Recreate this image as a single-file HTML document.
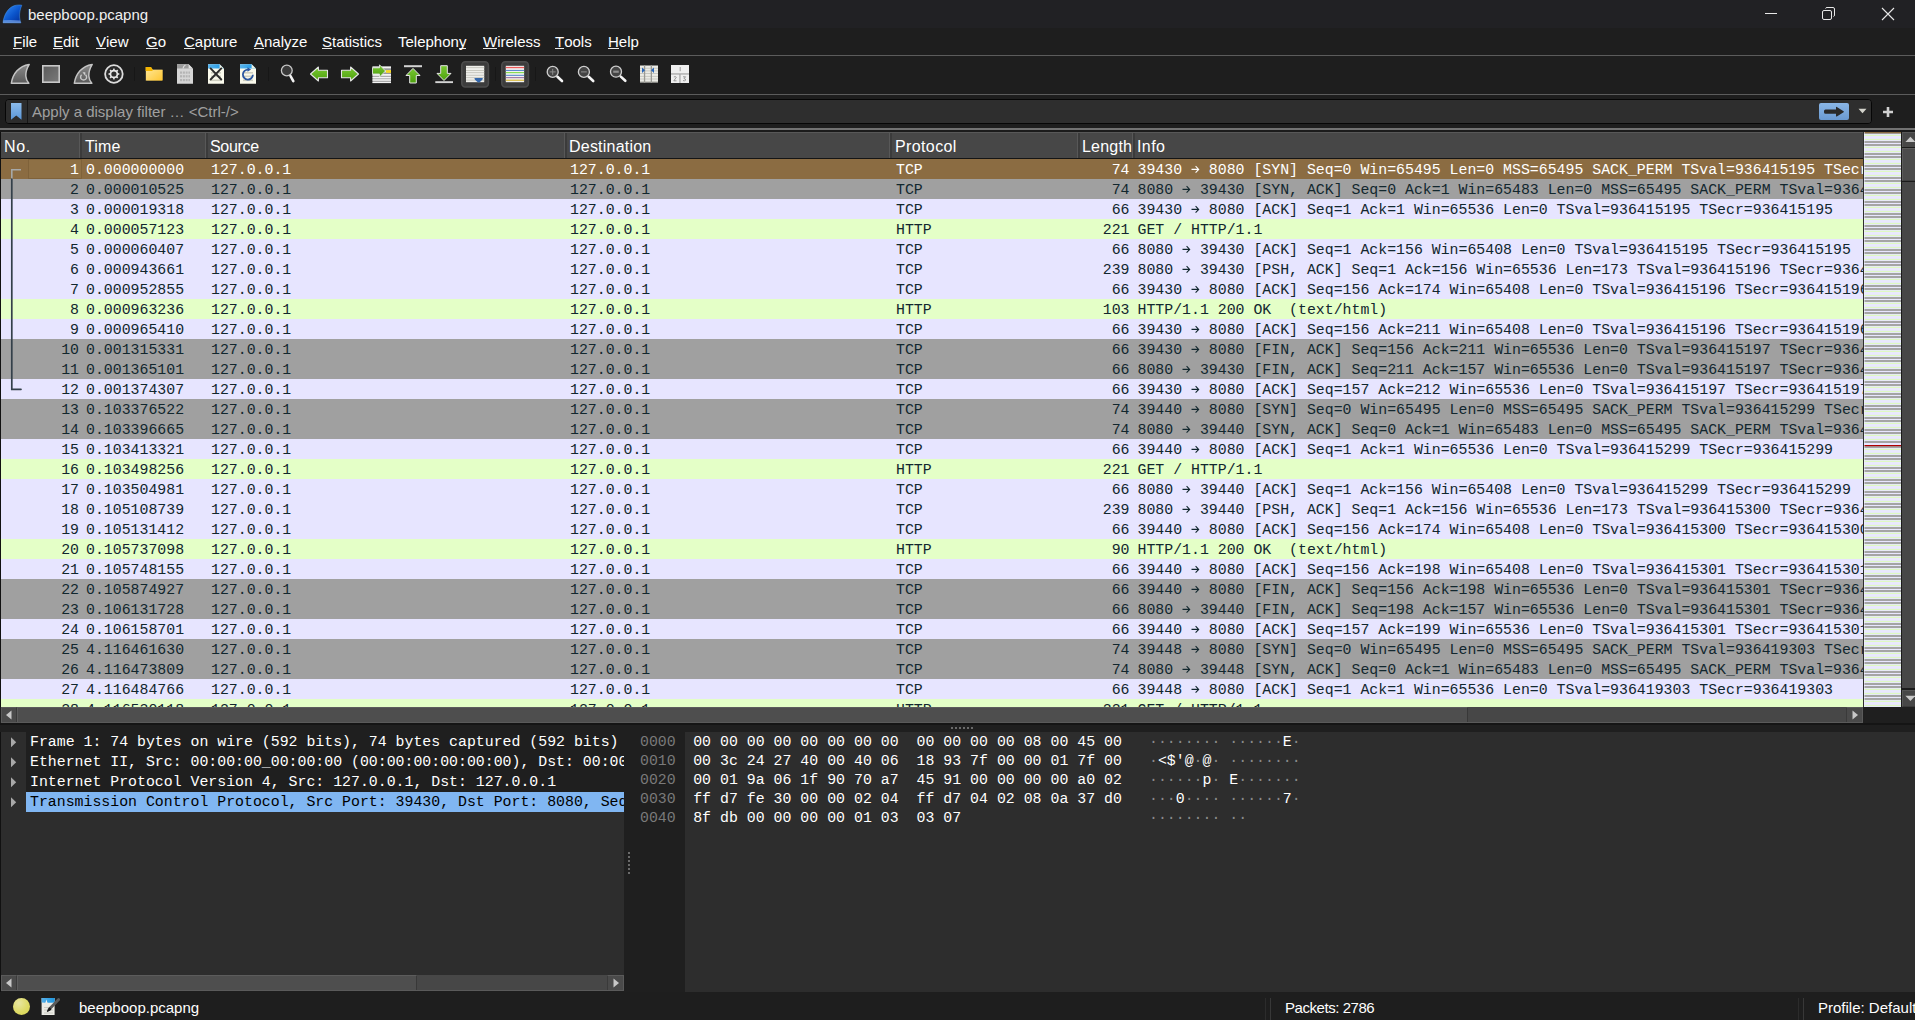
<!DOCTYPE html>
<html><head><meta charset="utf-8"><title>beepboop.pcapng</title>
<style>
*{box-sizing:border-box}
html,body{margin:0;padding:0}
body{width:1915px;height:1020px;overflow:hidden;position:relative;background:#1e1e1e;font-family:"Liberation Sans",sans-serif;color:#fff}
.a{position:absolute}
.ui{font-size:15px;white-space:pre;line-height:20px}
.mono{font-family:"Liberation Mono",monospace;font-size:14.867px;white-space:pre;line-height:20px}
.row{position:absolute;left:1px;width:1862px;height:20px;color:#12272e;overflow:hidden}
.row span{position:absolute;top:1px}
.tcp{background:#e7e5ff}
.hg{background:#e4ffc7}
.syn{background:#a0a0a0}
.sel{background:#8b6c42;color:#fff}
.hd span{position:absolute;top:0;height:26px;line-height:26px;font-size:15px}
.sep{position:absolute;width:1px;background:#333}
</style></head><body>

<div class="a" style="left:0;top:0;width:1915px;height:28px;background:#212124"></div>
<svg class="a" style="left:0;top:0" width="28" height="28" viewBox="0 0 28 28">
<defs><linearGradient id="shk" x1="0.1" y1="0.1" x2="0.9" y2="0.9"><stop offset="0" stop-color="#2f86f0"/><stop offset="0.55" stop-color="#0b55cc"/><stop offset="1" stop-color="#0434a0"/></linearGradient></defs>
<path d="M3 22.8 C3.8 15 8 7.5 14.5 5.6 C17 4.9 19.5 4.8 21.8 5.2 C20.2 9 19.3 13 19.6 17 C19.8 19.5 20.3 21.3 20.9 22.9 Z" fill="url(#shk)" stroke="#4a98f0" stroke-width="0.7" stroke-opacity="0.7"/>
<path d="M3.3 20.3 Q11 19.4 20.2 20.6 L20.9 22.9 L3 22.9 Z" fill="#8ab0ea" opacity="0.6"/>
</svg>
<div class="a ui" style="left:28px;top:5px;font-size:15px;color:#f0f0f0">beepboop.pcapng</div>
<div class="a" style="left:1765px;top:13px;width:12px;height:1px;background:#e8e8e8"></div>
<svg class="a" style="left:1822px;top:7px" width="14" height="14" viewBox="0 0 14 14"><rect x="0.5" y="3.5" width="9" height="9" rx="1.5" fill="none" stroke="#e8e8e8"/><path d="M3.5 1.5 Q3.8 0.5 5 0.5 L11 0.5 Q12.5 0.5 12.5 2 L12.5 8 Q12.5 9.2 11.5 9.5" fill="none" stroke="#e8e8e8"/></svg>
<svg class="a" style="left:1881px;top:7px" width="14" height="14" viewBox="0 0 14 14"><path d="M1 1 L13 13 M13 1 L1 13" stroke="#e8e8e8" stroke-width="1.1"/></svg>
<div class="a" style="left:0;top:28px;width:1915px;height:27px;background:#1e1e1e"></div>
<div class="a ui" style="left:13px;top:32px;color:#fff"><u style="text-decoration:none;border-bottom:1px solid #e8e8e8;display:inline-block;line-height:13px">F</u>ile</div>
<div class="a ui" style="left:53px;top:32px;color:#fff"><u style="text-decoration:none;border-bottom:1px solid #e8e8e8;display:inline-block;line-height:13px">E</u>dit</div>
<div class="a ui" style="left:96px;top:32px;color:#fff"><u style="text-decoration:none;border-bottom:1px solid #e8e8e8;display:inline-block;line-height:13px">V</u>iew</div>
<div class="a ui" style="left:146px;top:32px;color:#fff"><u style="text-decoration:none;border-bottom:1px solid #e8e8e8;display:inline-block;line-height:13px">G</u>o</div>
<div class="a ui" style="left:184px;top:32px;color:#fff"><u style="text-decoration:none;border-bottom:1px solid #e8e8e8;display:inline-block;line-height:13px">C</u>apture</div>
<div class="a ui" style="left:254px;top:32px;color:#fff"><u style="text-decoration:none;border-bottom:1px solid #e8e8e8;display:inline-block;line-height:13px">A</u>nalyze</div>
<div class="a ui" style="left:322px;top:32px;color:#fff"><u style="text-decoration:none;border-bottom:1px solid #e8e8e8;display:inline-block;line-height:13px">S</u>tatistics</div>
<div class="a ui" style="left:398px;top:32px;color:#fff">Telephon<u style="text-decoration:none;border-bottom:1px solid #e8e8e8;display:inline-block;line-height:13px">y</u></div>
<div class="a ui" style="left:483px;top:32px;color:#fff"><u style="text-decoration:none;border-bottom:1px solid #e8e8e8;display:inline-block;line-height:13px">W</u>ireless</div>
<div class="a ui" style="left:555px;top:32px;color:#fff"><u style="text-decoration:none;border-bottom:1px solid #e8e8e8;display:inline-block;line-height:13px">T</u>ools</div>
<div class="a ui" style="left:608px;top:32px;color:#fff"><u style="text-decoration:none;border-bottom:1px solid #e8e8e8;display:inline-block;line-height:13px">H</u>elp</div>
<div class="a" style="left:0;top:55px;width:1915px;height:1px;background:#5c5c5c"></div>
<div class="a" style="left:0;top:56px;width:1915px;height:38px;background:#1e1e1e"></div>
<div class="a" style="left:0;top:94px;width:1915px;height:1px;background:#5c5c5c"></div>
<svg class="a" style="left:0;top:0" width="700" height="95" viewBox="0 0 700 95">
<defs>
<linearGradient id="fing" x1="0" y1="0" x2="0" y2="1"><stop offset="0" stop-color="#8a8a8a"/><stop offset="1" stop-color="#5a5a5a"/></linearGradient>
<linearGradient id="stopg" x1="0" y1="0" x2="1" y2="1"><stop offset="0" stop-color="#5a5a5a"/><stop offset="1" stop-color="#7a7a7a"/></linearGradient>
<linearGradient id="foldg" x1="0" y1="0" x2="1" y2="1"><stop offset="0" stop-color="#ffeaa0"/><stop offset="1" stop-color="#ffc52e"/></linearGradient>
<linearGradient id="greeng" x1="0" y1="0" x2="0" y2="1"><stop offset="0" stop-color="#78c832"/><stop offset="1" stop-color="#4ea00e"/></linearGradient>
<linearGradient id="blueb" x1="0" y1="0" x2="1" y2="0"><stop offset="0" stop-color="#5ab4ec"/><stop offset="1" stop-color="#1896e6"/></linearGradient>
</defs>
<!-- start capture fin -->
<path d="M11.3 83.3 C12.8 73.5 19 66 29.2 64.4 C26.8 68.5 25.6 72 25.8 76 C26 79 27.3 81.5 28.8 83.3 Z" fill="url(#fing)" stroke="#c4c4c4" stroke-width="1.5" stroke-linejoin="round"/>
<!-- stop -->
<rect x="42.8" y="65.8" width="16.4" height="16.4" fill="url(#stopg)" stroke="#c8c8c8" stroke-width="1.6"/>
<!-- restart fin -->
<path d="M74.3 83.3 C75.8 73.5 82 66 92.2 64.4 C89.8 68.5 88.6 72 88.8 76 C89 79 90.3 81.5 91.8 83.3 Z" fill="url(#fing)" stroke="#c4c4c4" stroke-width="1.5" stroke-linejoin="round"/>
<path d="M81.6 74.8 A3 3 0 1 0 85.6 74.8" fill="none" stroke="#c8c8c8" stroke-width="1.4"/>
<path d="M82.5 72.2 L85.3 72.2 L85.3 76 Z" fill="#d0d0d0"/>
<!-- options gear -->
<circle cx="113.9" cy="74" r="8.8" fill="#2a2a2a" stroke="#dcdcdc" stroke-width="1.8"/>
<g fill="#e8e8e8">
<circle cx="113.9" cy="74" r="4.3"/>
<rect x="113.1" y="68.6" width="1.6" height="10.8"/>
<rect x="113.1" y="68.6" width="1.6" height="10.8" transform="rotate(45 113.9 74)"/>
<rect x="113.1" y="68.6" width="1.6" height="10.8" transform="rotate(90 113.9 74)"/>
<rect x="113.1" y="68.6" width="1.6" height="10.8" transform="rotate(135 113.9 74)"/>
</g>
<circle cx="113.9" cy="74" r="2.6" fill="#2e2e2e"/>
<!-- separator -->
<rect x="134" y="67" width="1" height="14" fill="#171717"/>
<!-- folder -->
<path d="M145.5 68 Q145.5 67 146.5 67 L151 67 L152.5 69.3 L162 69.3 Q163 69.3 163 70.3 L163 80 Q163 81 162 81 L146.5 81 Q145.5 81 145.5 80 Z" fill="url(#foldg)" stroke="#0f1420" stroke-width="0.6"/>
<path d="M145.6 67.6 Q145.6 67 146.5 67 L151 67 L152.5 69.3 L152.5 71 L145.6 71 Z" fill="#f4b400"/>
<!-- save doc (disabled grey) -->
<path d="M177 64.3 L188.6 64.3 L193 68.7 L193 83.7 L177 83.7 Z" fill="#d6d6d6"/>
<path d="M177 64.3 L188.6 64.3 L192.8 68.5 L177 68.5 Z" fill="#9c9c9c"/>
<path d="M188.6 64.3 L188.6 68.5 L192.8 68.5 Z" fill="#e0e0e0"/>
<path d="M183 68.5 Q183.5 65.8 185.5 65" stroke="#dedede" stroke-width="1.3" fill="none"/>
<g fill="#b4b4b4"><rect x="180" y="71.5" width="10" height="2.2"/><rect x="180" y="75.2" width="10" height="2.2"/><rect x="180" y="79" width="10" height="2.2"/></g>
<g fill="#d6d6d6"><rect x="182.2" y="71" width="0.8" height="11"/><rect x="184.9" y="71" width="0.8" height="11"/><rect x="187.6" y="71" width="0.8" height="11"/></g>
<!-- close doc -->
<path d="M208 64.3 L219.6 64.3 L224 68.7 L224 83.7 L208 83.7 Z" fill="#fafaec"/>
<path d="M208 64.3 L219.6 64.3 L223.8 68.5 L208 68.5 Z" fill="url(#blueb)"/>
<path d="M219.6 64.3 L219.6 68.5 L223.8 68.5 Z" fill="#f0f0e0"/>
<g fill="#cfcfc0"><rect x="211" y="72" width="10" height="1.6"/><rect x="211" y="75.5" width="10" height="1.6"/><rect x="211" y="79.5" width="10" height="1.6"/></g>
<path d="M210.6 68.4 L221.3 79.5 M221.3 68.4 L210.6 79.5" stroke="#2b2b2b" stroke-width="1.9" stroke-linecap="round"/>
<!-- reload doc -->
<path d="M240 64.3 L251.6 64.3 L256 68.7 L256 83.7 L240 83.7 Z" fill="#fafaec"/>
<path d="M240 64.3 L251.6 64.3 L255.8 68.5 L240 68.5 Z" fill="url(#blueb)"/>
<path d="M251.6 64.3 L251.6 68.5 L255.8 68.5 Z" fill="#f0f0e0"/>
<g fill="#cfcfc0"><rect x="243" y="72" width="10" height="1.6"/><rect x="243" y="75.5" width="10" height="1.6"/><rect x="243" y="79.5" width="10" height="1.6"/></g>
<path d="M252.9 74.8 A5 5 0 1 1 248.2 69.6" fill="none" stroke="#2a56a0" stroke-width="1.8"/>
<path d="M247.5 67.2 L251 69.5 L247.5 71.8 Z" fill="#2a56a0"/>
<!-- separator -->
<rect x="268" y="67" width="1" height="14" fill="#171717"/>
<!-- find -->
<circle cx="286.8" cy="70.5" r="5.4" fill="#3a3a3a" stroke="#c8c8c8" stroke-width="1.3"/>
<path d="M290.5 76 L293.3 81.2" stroke="#f4f4f4" stroke-width="2.6" stroke-linecap="round"/>
<!-- back -->
<path d="M310.5 74 L318.4 67 L318.4 70.2 L327.5 70.2 L327.5 77.8 L318.4 77.8 L318.4 81 Z" fill="url(#greeng)" stroke="#e6e6e6" stroke-width="1.1" stroke-linejoin="round"/>
<!-- forward -->
<path d="M358.5 74 L350.6 67 L350.6 70.2 L341.5 70.2 L341.5 77.8 L350.6 77.8 L350.6 81 Z" fill="url(#greeng)" stroke="#e6e6e6" stroke-width="1.1" stroke-linejoin="round"/>
<!-- go to packet -->
<g>
<rect x="372.5" y="66.5" width="18.5" height="16.5" fill="#9a9a9a"/>
<rect x="372.5" y="66.5" width="18.5" height="1.8" fill="#f4f4f4"/>
<rect x="372.5" y="70.5" width="18.5" height="1.8" fill="#f4f4f4"/>
<rect x="372.5" y="74" width="18.5" height="1.8" fill="#f4f4f4"/>
<rect x="372.5" y="76.8" width="18.5" height="1.6" fill="#f4f4f4"/>
<rect x="372.5" y="79.2" width="18.5" height="1.6" fill="#f4f4f4"/>
<rect x="372.5" y="81.8" width="18.5" height="1.3" fill="#f4f4f4"/>
<rect x="386" y="70.2" width="5" height="2.6" fill="#f8d820"/>
<path d="M372.5 67.8 L379.5 67.8 L379.5 64.8 L385.5 71 L379.5 77 L379.5 74 L372.5 74 Z" fill="url(#greeng)" stroke="#e0e0e0" stroke-width="0.9" stroke-linejoin="round"/>
</g>
<!-- first packet -->
<rect x="404" y="65.2" width="18" height="2" fill="#d4d4d4"/>
<path d="M413 68.4 L420 75.5 L416.3 75.5 L416.3 83 L409.7 83 L409.7 75.5 L406 75.5 Z" fill="url(#greeng)" stroke="#e6e6e6" stroke-width="1" stroke-linejoin="round"/>
<!-- last packet -->
<path d="M444 80.5 L451 73.4 L447.3 73.4 L447.3 65.7 L440.7 65.7 L440.7 73.4 L437 73.4 Z" fill="url(#greeng)" stroke="#e6e6e6" stroke-width="1" stroke-linejoin="round"/>
<rect x="435.3" y="81.2" width="17.7" height="1.9" fill="#d4d4d4"/>
<!-- autoscroll button -->
<rect x="461.8" y="61.8" width="26.6" height="25.2" rx="3.5" fill="#3c3c3c" stroke="#4c4c4c" stroke-width="1.6"/>
<rect x="466" y="65.8" width="18.2" height="16.4" fill="#efefeb"/>
<g fill="#c4c4bc"><rect x="466" y="67.2" width="18.2" height="0.9"/><rect x="466" y="70" width="18.2" height="0.9"/><rect x="466" y="72.2" width="18.2" height="0.9"/><rect x="466" y="74.8" width="18.2" height="0.9"/><rect x="466" y="77.2" width="18.2" height="0.9"/><rect x="466" y="79.7" width="18.2" height="0.9"/></g>
<path d="M474.3 78.6 Q474.3 78 475.5 78 L481.8 78 Q483 78 483 78.6 Q483 79.5 480.2 81.8 Q478.7 83.2 477.2 81.8 Q474.3 79.5 474.3 78.6 Z" fill="#3366aa"/>
<rect x="495" y="67" width="1" height="14" fill="#171717"/>
<!-- colorize button -->
<rect x="501.8" y="61.8" width="26.6" height="25.2" rx="3.5" fill="#3c3c3c" stroke="#4c4c4c" stroke-width="1.6"/>
<rect x="505.8" y="65.8" width="18.3" height="16.4" fill="#f2f2f2"/>
<rect x="505.8" y="66.9" width="18.3" height="1.3" fill="#ee5c5c"/>
<rect x="505.8" y="69.9" width="18.3" height="1.1" fill="#5c8ccc"/>
<rect x="505.8" y="72" width="18.3" height="1.2" fill="#88dd55"/>
<rect x="505.8" y="74.8" width="18.3" height="1.1" fill="#5c8ccc"/>
<rect x="505.8" y="77.1" width="18.3" height="1.1" fill="#9a70a0"/>
<rect x="505.8" y="79.6" width="18.3" height="1.3" fill="#dcbf4a"/>
<rect x="535" y="67" width="1" height="14" fill="#171717"/>
<!-- zoom in -->
<circle cx="552.7" cy="71.9" r="5.5" fill="#444" stroke="#cfcfcf" stroke-width="1.3"/>
<path d="M549.7 71.9 L555.7 71.9 M552.7 68.9 L552.7 74.9" stroke="#8a8a8a" stroke-width="1"/>
<path d="M557.5 76.8 L562 81" stroke="#f6f6f6" stroke-width="2.6" stroke-linecap="round"/>
<!-- zoom out -->
<circle cx="583.9" cy="71.9" r="5.5" fill="#444" stroke="#cfcfcf" stroke-width="1.3"/>
<path d="M581 71.9 L586.8 71.9" stroke="#8a8a8a" stroke-width="1.1"/>
<path d="M588.7 76.8 L593.2 81" stroke="#f6f6f6" stroke-width="2.6" stroke-linecap="round"/>
<!-- normal size -->
<circle cx="616" cy="71.7" r="5.5" fill="#444" stroke="#cfcfcf" stroke-width="1.3"/>
<path d="M613.2 71.7 L618.8 71.7" stroke="#8e8e8e" stroke-width="2.2"/>
<path d="M620.8 76.6 L625.3 80.8" stroke="#f6f6f6" stroke-width="2.6" stroke-linecap="round"/>
<!-- resize columns -->
<rect x="640" y="65.5" width="18" height="17" fill="#ecece6"/>
<g fill="#c0c0b8"><rect x="640" y="67.8" width="18" height="0.8"/><rect x="640" y="70.5" width="18" height="0.8"/><rect x="640" y="73.2" width="18" height="0.8"/><rect x="640" y="75.9" width="18" height="0.8"/><rect x="640" y="78.6" width="18" height="0.8"/><rect x="640" y="81.2" width="18" height="0.8"/></g>
<rect x="643.9" y="65" width="1.3" height="18" fill="#9a9a94"/>
<rect x="650.7" y="65" width="1.3" height="18" fill="#9a9a94"/>
<path d="M642 67.6 L645 70.3 L642 73 Z" fill="#2a66b8"/>
<path d="M654 67.6 L651 70.3 L654 73 Z" fill="#2a66b8"/>
<!-- layout -->
<rect x="671" y="65" width="18" height="18" fill="#efefef"/>
<rect x="671" y="73.3" width="18" height="1.3" fill="#a8a8a8"/>
<rect x="679.3" y="74" width="1.3" height="9" fill="#a8a8a8"/>
<g stroke="#777" stroke-width="0.7" fill="none"><path d="M680.2 67 L680.2 71.2"/><path d="M673.8 77 Q675.5 76 676.3 77.3 L673.8 80.8 L676.5 80.8"/><path d="M683 76.8 L685.6 76.8 L684 78.5 Q686 78.8 685.5 80.3 Q684.5 81.3 683 80.5"/></g>
</svg>

<div class="a" style="left:0;top:95px;width:1915px;height:33px;background:#1e1e1e"></div>
<div class="a" style="left:5px;top:99px;width:1867px;height:25px;background:#2e2e2e;border:1px solid #060606;border-radius:4px"></div>
<div class="a" style="left:6px;top:100px;width:21px;height:23px;background:#2c2c2c;border-radius:3px 0 0 3px"></div>
<div class="a" style="left:27px;top:100px;width:1px;height:23px;background:#161616"></div>
<div class="a" style="left:1815px;top:100px;width:56px;height:23px;background:#2e2e2e;border-radius:0 3px 3px 0"></div>
<svg class="a" style="left:10px;top:102px" width="13" height="19" viewBox="0 0 13 19"><defs><linearGradient id="bmg" x1="0" y1="0" x2="0" y2="1"><stop offset="0" stop-color="#8cbcec"/><stop offset="1" stop-color="#5a96d8"/></linearGradient></defs><path d="M1 1 L11.5 1 L11.5 17.8 L6.25 13.6 L1 17.8 Z" fill="url(#bmg)"/></svg>
<div class="a ui" style="left:32px;top:102px;color:#a0a0a0">Apply a display filter … &lt;Ctrl-/&gt;</div>
<div class="a" style="left:1819px;top:103px;width:30px;height:17px;border-radius:2px;background:linear-gradient(#8ab6e6,#6a9ad2)"></div>
<svg class="a" style="left:1823px;top:105px" width="22" height="13" viewBox="0 0 22 13"><path d="M2.5 4.6 L13 4.6 L13 2.2 Q13 1.4 13.8 1.9 L20.6 6.2 Q21.2 6.7 20.6 7.2 L13.8 11.4 Q13 11.9 13 11.1 L13 8.8 L2.5 8.8 Q1 8.8 1 7.3 L1 6.1 Q1 4.6 2.5 4.6 Z" fill="#2a2a2a"/></svg>
<svg class="a" style="left:1858px;top:108px" width="10" height="6" viewBox="0 0 10 6"><path d="M0.5 0.8 L8.5 0.8 L4.5 5.2 Z" fill="#d4d4cc"/></svg>
<svg class="a" style="left:1882px;top:106px" width="12" height="12" viewBox="0 0 12 12"><path d="M6 1 L6 11 M1 6 L11 6" stroke="#d0d0d0" stroke-width="2.6"/></svg>
<div class="a" style="left:0;top:128px;width:1915px;height:2px;background:#727272"></div>
<div class="a" style="left:0;top:130px;width:1915px;height:2px;background:#1b1b1b"></div>
<div class="a" style="left:0;top:132px;width:1915px;height:575px;background:#111"></div>
<div class="a" style="left:1px;top:132px;width:1862px;height:26px;background:#474747;border-top:1px solid #585858"></div>
<div class="a ui" style="left:4px;top:137px;line-height:20px;font-size:16px;letter-spacing:0.6px;color:#fff">No.</div>
<div class="a ui" style="left:85px;top:137px;line-height:20px;font-size:16px;letter-spacing:0.15px;color:#fff">Time</div>
<div class="a ui" style="left:210px;top:137px;line-height:20px;font-size:16px;letter-spacing:-0.3px;color:#fff">Source</div>
<div class="a ui" style="left:569px;top:137px;line-height:20px;font-size:16px;letter-spacing:0.22px;color:#fff">Destination</div>
<div class="a ui" style="left:895px;top:137px;line-height:20px;font-size:16px;letter-spacing:0.38px;color:#fff">Protocol</div>
<div class="a ui" style="left:1082px;top:137px;line-height:20px;font-size:16px;letter-spacing:0.2px;color:#fff">Length</div>
<div class="a ui" style="left:1137px;top:137px;line-height:20px;font-size:16px;letter-spacing:0.4px;color:#fff">Info</div>
<div class="a" style="left:79px;top:133px;width:1px;height:25px;background:#585858"></div>
<div class="a" style="left:80px;top:133px;width:2px;height:25px;background:#3b3b3b"></div>
<div class="a" style="left:205px;top:133px;width:1px;height:25px;background:#585858"></div>
<div class="a" style="left:206px;top:133px;width:2px;height:25px;background:#3b3b3b"></div>
<div class="a" style="left:564px;top:133px;width:1px;height:25px;background:#585858"></div>
<div class="a" style="left:565px;top:133px;width:2px;height:25px;background:#3b3b3b"></div>
<div class="a" style="left:889px;top:133px;width:1px;height:25px;background:#585858"></div>
<div class="a" style="left:890px;top:133px;width:2px;height:25px;background:#3b3b3b"></div>
<div class="a" style="left:1077px;top:133px;width:1px;height:25px;background:#585858"></div>
<div class="a" style="left:1078px;top:133px;width:2px;height:25px;background:#3b3b3b"></div>
<div class="a" style="left:1132px;top:133px;width:1px;height:25px;background:#585858"></div>
<div class="a" style="left:1133px;top:133px;width:2px;height:25px;background:#3b3b3b"></div>
<div class="a" style="left:1px;top:158px;width:1862px;height:1px;background:#151515"></div>
<div class="row mono sel" style="top:159px;height:20px">
<span style="right:1784.0px">1</span>
<span style="left:85px">0.000000000</span>
<span style="left:210px">127.0.0.1</span>
<span style="left:569px">127.0.0.1</span>
<span style="left:895px">TCP</span>
<span style="right:733.5px">74</span>
<span style="left:1136.5px">39430 <svg width="8.92" height="19" viewBox="0 0 8.92 19" style="vertical-align:top"><path d="M0.5 9.4 L7.6 9.4 M4.6 6.2 L7.7 9.4 L4.6 12.6" stroke="currentColor" stroke-width="1.1" fill="none"/></svg> 8080 [SYN] Seq=0 Win=65495 Len=0 MSS=65495 SACK_PERM TSval=936415195 TSecr=0 WS=128</span>
</div>
<div class="row mono syn" style="top:179px;height:20px">
<span style="right:1784.0px">2</span>
<span style="left:85px">0.000010525</span>
<span style="left:210px">127.0.0.1</span>
<span style="left:569px">127.0.0.1</span>
<span style="left:895px">TCP</span>
<span style="right:733.5px">74</span>
<span style="left:1136.5px">8080 <svg width="8.92" height="19" viewBox="0 0 8.92 19" style="vertical-align:top"><path d="M0.5 9.4 L7.6 9.4 M4.6 6.2 L7.7 9.4 L4.6 12.6" stroke="currentColor" stroke-width="1.1" fill="none"/></svg> 39430 [SYN, ACK] Seq=0 Ack=1 Win=65483 Len=0 MSS=65495 SACK_PERM TSval=936415195 TSecr=936415195 WS=128</span>
</div>
<div class="row mono tcp" style="top:199px;height:20px">
<span style="right:1784.0px">3</span>
<span style="left:85px">0.000019318</span>
<span style="left:210px">127.0.0.1</span>
<span style="left:569px">127.0.0.1</span>
<span style="left:895px">TCP</span>
<span style="right:733.5px">66</span>
<span style="left:1136.5px">39430 <svg width="8.92" height="19" viewBox="0 0 8.92 19" style="vertical-align:top"><path d="M0.5 9.4 L7.6 9.4 M4.6 6.2 L7.7 9.4 L4.6 12.6" stroke="currentColor" stroke-width="1.1" fill="none"/></svg> 8080 [ACK] Seq=1 Ack=1 Win=65536 Len=0 TSval=936415195 TSecr=936415195</span>
</div>
<div class="row mono hg" style="top:219px;height:20px">
<span style="right:1784.0px">4</span>
<span style="left:85px">0.000057123</span>
<span style="left:210px">127.0.0.1</span>
<span style="left:569px">127.0.0.1</span>
<span style="left:895px">HTTP</span>
<span style="right:733.5px">221</span>
<span style="left:1136.5px">GET / HTTP/1.1</span>
</div>
<div class="row mono tcp" style="top:239px;height:20px">
<span style="right:1784.0px">5</span>
<span style="left:85px">0.000060407</span>
<span style="left:210px">127.0.0.1</span>
<span style="left:569px">127.0.0.1</span>
<span style="left:895px">TCP</span>
<span style="right:733.5px">66</span>
<span style="left:1136.5px">8080 <svg width="8.92" height="19" viewBox="0 0 8.92 19" style="vertical-align:top"><path d="M0.5 9.4 L7.6 9.4 M4.6 6.2 L7.7 9.4 L4.6 12.6" stroke="currentColor" stroke-width="1.1" fill="none"/></svg> 39430 [ACK] Seq=1 Ack=156 Win=65408 Len=0 TSval=936415195 TSecr=936415195</span>
</div>
<div class="row mono tcp" style="top:259px;height:20px">
<span style="right:1784.0px">6</span>
<span style="left:85px">0.000943661</span>
<span style="left:210px">127.0.0.1</span>
<span style="left:569px">127.0.0.1</span>
<span style="left:895px">TCP</span>
<span style="right:733.5px">239</span>
<span style="left:1136.5px">8080 <svg width="8.92" height="19" viewBox="0 0 8.92 19" style="vertical-align:top"><path d="M0.5 9.4 L7.6 9.4 M4.6 6.2 L7.7 9.4 L4.6 12.6" stroke="currentColor" stroke-width="1.1" fill="none"/></svg> 39430 [PSH, ACK] Seq=1 Ack=156 Win=65536 Len=173 TSval=936415196 TSecr=936415195</span>
</div>
<div class="row mono tcp" style="top:279px;height:20px">
<span style="right:1784.0px">7</span>
<span style="left:85px">0.000952855</span>
<span style="left:210px">127.0.0.1</span>
<span style="left:569px">127.0.0.1</span>
<span style="left:895px">TCP</span>
<span style="right:733.5px">66</span>
<span style="left:1136.5px">39430 <svg width="8.92" height="19" viewBox="0 0 8.92 19" style="vertical-align:top"><path d="M0.5 9.4 L7.6 9.4 M4.6 6.2 L7.7 9.4 L4.6 12.6" stroke="currentColor" stroke-width="1.1" fill="none"/></svg> 8080 [ACK] Seq=156 Ack=174 Win=65408 Len=0 TSval=936415196 TSecr=936415196</span>
</div>
<div class="row mono hg" style="top:299px;height:20px">
<span style="right:1784.0px">8</span>
<span style="left:85px">0.000963236</span>
<span style="left:210px">127.0.0.1</span>
<span style="left:569px">127.0.0.1</span>
<span style="left:895px">HTTP</span>
<span style="right:733.5px">103</span>
<span style="left:1136.5px">HTTP/1.1 200 OK  (text/html)</span>
</div>
<div class="row mono tcp" style="top:319px;height:20px">
<span style="right:1784.0px">9</span>
<span style="left:85px">0.000965410</span>
<span style="left:210px">127.0.0.1</span>
<span style="left:569px">127.0.0.1</span>
<span style="left:895px">TCP</span>
<span style="right:733.5px">66</span>
<span style="left:1136.5px">39430 <svg width="8.92" height="19" viewBox="0 0 8.92 19" style="vertical-align:top"><path d="M0.5 9.4 L7.6 9.4 M4.6 6.2 L7.7 9.4 L4.6 12.6" stroke="currentColor" stroke-width="1.1" fill="none"/></svg> 8080 [ACK] Seq=156 Ack=211 Win=65408 Len=0 TSval=936415196 TSecr=936415196</span>
</div>
<div class="row mono syn" style="top:339px;height:20px">
<span style="right:1784.0px">10</span>
<span style="left:85px">0.001315331</span>
<span style="left:210px">127.0.0.1</span>
<span style="left:569px">127.0.0.1</span>
<span style="left:895px">TCP</span>
<span style="right:733.5px">66</span>
<span style="left:1136.5px">39430 <svg width="8.92" height="19" viewBox="0 0 8.92 19" style="vertical-align:top"><path d="M0.5 9.4 L7.6 9.4 M4.6 6.2 L7.7 9.4 L4.6 12.6" stroke="currentColor" stroke-width="1.1" fill="none"/></svg> 8080 [FIN, ACK] Seq=156 Ack=211 Win=65536 Len=0 TSval=936415197 TSecr=936415196</span>
</div>
<div class="row mono syn" style="top:359px;height:20px">
<span style="right:1784.0px">11</span>
<span style="left:85px">0.001365101</span>
<span style="left:210px">127.0.0.1</span>
<span style="left:569px">127.0.0.1</span>
<span style="left:895px">TCP</span>
<span style="right:733.5px">66</span>
<span style="left:1136.5px">8080 <svg width="8.92" height="19" viewBox="0 0 8.92 19" style="vertical-align:top"><path d="M0.5 9.4 L7.6 9.4 M4.6 6.2 L7.7 9.4 L4.6 12.6" stroke="currentColor" stroke-width="1.1" fill="none"/></svg> 39430 [FIN, ACK] Seq=211 Ack=157 Win=65536 Len=0 TSval=936415197 TSecr=936415197</span>
</div>
<div class="row mono tcp" style="top:379px;height:20px">
<span style="right:1784.0px">12</span>
<span style="left:85px">0.001374307</span>
<span style="left:210px">127.0.0.1</span>
<span style="left:569px">127.0.0.1</span>
<span style="left:895px">TCP</span>
<span style="right:733.5px">66</span>
<span style="left:1136.5px">39430 <svg width="8.92" height="19" viewBox="0 0 8.92 19" style="vertical-align:top"><path d="M0.5 9.4 L7.6 9.4 M4.6 6.2 L7.7 9.4 L4.6 12.6" stroke="currentColor" stroke-width="1.1" fill="none"/></svg> 8080 [ACK] Seq=157 Ack=212 Win=65536 Len=0 TSval=936415197 TSecr=936415197</span>
</div>
<div class="row mono syn" style="top:399px;height:20px">
<span style="right:1784.0px">13</span>
<span style="left:85px">0.103376522</span>
<span style="left:210px">127.0.0.1</span>
<span style="left:569px">127.0.0.1</span>
<span style="left:895px">TCP</span>
<span style="right:733.5px">74</span>
<span style="left:1136.5px">39440 <svg width="8.92" height="19" viewBox="0 0 8.92 19" style="vertical-align:top"><path d="M0.5 9.4 L7.6 9.4 M4.6 6.2 L7.7 9.4 L4.6 12.6" stroke="currentColor" stroke-width="1.1" fill="none"/></svg> 8080 [SYN] Seq=0 Win=65495 Len=0 MSS=65495 SACK_PERM TSval=936415299 TSecr=0 WS=128</span>
</div>
<div class="row mono syn" style="top:419px;height:20px">
<span style="right:1784.0px">14</span>
<span style="left:85px">0.103396665</span>
<span style="left:210px">127.0.0.1</span>
<span style="left:569px">127.0.0.1</span>
<span style="left:895px">TCP</span>
<span style="right:733.5px">74</span>
<span style="left:1136.5px">8080 <svg width="8.92" height="19" viewBox="0 0 8.92 19" style="vertical-align:top"><path d="M0.5 9.4 L7.6 9.4 M4.6 6.2 L7.7 9.4 L4.6 12.6" stroke="currentColor" stroke-width="1.1" fill="none"/></svg> 39440 [SYN, ACK] Seq=0 Ack=1 Win=65483 Len=0 MSS=65495 SACK_PERM TSval=936415299 TSecr=936415299 WS=128</span>
</div>
<div class="row mono tcp" style="top:439px;height:20px">
<span style="right:1784.0px">15</span>
<span style="left:85px">0.103413321</span>
<span style="left:210px">127.0.0.1</span>
<span style="left:569px">127.0.0.1</span>
<span style="left:895px">TCP</span>
<span style="right:733.5px">66</span>
<span style="left:1136.5px">39440 <svg width="8.92" height="19" viewBox="0 0 8.92 19" style="vertical-align:top"><path d="M0.5 9.4 L7.6 9.4 M4.6 6.2 L7.7 9.4 L4.6 12.6" stroke="currentColor" stroke-width="1.1" fill="none"/></svg> 8080 [ACK] Seq=1 Ack=1 Win=65536 Len=0 TSval=936415299 TSecr=936415299</span>
</div>
<div class="row mono hg" style="top:459px;height:20px">
<span style="right:1784.0px">16</span>
<span style="left:85px">0.103498256</span>
<span style="left:210px">127.0.0.1</span>
<span style="left:569px">127.0.0.1</span>
<span style="left:895px">HTTP</span>
<span style="right:733.5px">221</span>
<span style="left:1136.5px">GET / HTTP/1.1</span>
</div>
<div class="row mono tcp" style="top:479px;height:20px">
<span style="right:1784.0px">17</span>
<span style="left:85px">0.103504981</span>
<span style="left:210px">127.0.0.1</span>
<span style="left:569px">127.0.0.1</span>
<span style="left:895px">TCP</span>
<span style="right:733.5px">66</span>
<span style="left:1136.5px">8080 <svg width="8.92" height="19" viewBox="0 0 8.92 19" style="vertical-align:top"><path d="M0.5 9.4 L7.6 9.4 M4.6 6.2 L7.7 9.4 L4.6 12.6" stroke="currentColor" stroke-width="1.1" fill="none"/></svg> 39440 [ACK] Seq=1 Ack=156 Win=65408 Len=0 TSval=936415299 TSecr=936415299</span>
</div>
<div class="row mono tcp" style="top:499px;height:20px">
<span style="right:1784.0px">18</span>
<span style="left:85px">0.105108739</span>
<span style="left:210px">127.0.0.1</span>
<span style="left:569px">127.0.0.1</span>
<span style="left:895px">TCP</span>
<span style="right:733.5px">239</span>
<span style="left:1136.5px">8080 <svg width="8.92" height="19" viewBox="0 0 8.92 19" style="vertical-align:top"><path d="M0.5 9.4 L7.6 9.4 M4.6 6.2 L7.7 9.4 L4.6 12.6" stroke="currentColor" stroke-width="1.1" fill="none"/></svg> 39440 [PSH, ACK] Seq=1 Ack=156 Win=65536 Len=173 TSval=936415300 TSecr=936415299</span>
</div>
<div class="row mono tcp" style="top:519px;height:20px">
<span style="right:1784.0px">19</span>
<span style="left:85px">0.105131412</span>
<span style="left:210px">127.0.0.1</span>
<span style="left:569px">127.0.0.1</span>
<span style="left:895px">TCP</span>
<span style="right:733.5px">66</span>
<span style="left:1136.5px">39440 <svg width="8.92" height="19" viewBox="0 0 8.92 19" style="vertical-align:top"><path d="M0.5 9.4 L7.6 9.4 M4.6 6.2 L7.7 9.4 L4.6 12.6" stroke="currentColor" stroke-width="1.1" fill="none"/></svg> 8080 [ACK] Seq=156 Ack=174 Win=65408 Len=0 TSval=936415300 TSecr=936415300</span>
</div>
<div class="row mono hg" style="top:539px;height:20px">
<span style="right:1784.0px">20</span>
<span style="left:85px">0.105737098</span>
<span style="left:210px">127.0.0.1</span>
<span style="left:569px">127.0.0.1</span>
<span style="left:895px">HTTP</span>
<span style="right:733.5px">90</span>
<span style="left:1136.5px">HTTP/1.1 200 OK  (text/html)</span>
</div>
<div class="row mono tcp" style="top:559px;height:20px">
<span style="right:1784.0px">21</span>
<span style="left:85px">0.105748155</span>
<span style="left:210px">127.0.0.1</span>
<span style="left:569px">127.0.0.1</span>
<span style="left:895px">TCP</span>
<span style="right:733.5px">66</span>
<span style="left:1136.5px">39440 <svg width="8.92" height="19" viewBox="0 0 8.92 19" style="vertical-align:top"><path d="M0.5 9.4 L7.6 9.4 M4.6 6.2 L7.7 9.4 L4.6 12.6" stroke="currentColor" stroke-width="1.1" fill="none"/></svg> 8080 [ACK] Seq=156 Ack=198 Win=65408 Len=0 TSval=936415301 TSecr=936415301</span>
</div>
<div class="row mono syn" style="top:579px;height:20px">
<span style="right:1784.0px">22</span>
<span style="left:85px">0.105874927</span>
<span style="left:210px">127.0.0.1</span>
<span style="left:569px">127.0.0.1</span>
<span style="left:895px">TCP</span>
<span style="right:733.5px">66</span>
<span style="left:1136.5px">39440 <svg width="8.92" height="19" viewBox="0 0 8.92 19" style="vertical-align:top"><path d="M0.5 9.4 L7.6 9.4 M4.6 6.2 L7.7 9.4 L4.6 12.6" stroke="currentColor" stroke-width="1.1" fill="none"/></svg> 8080 [FIN, ACK] Seq=156 Ack=198 Win=65536 Len=0 TSval=936415301 TSecr=936415301</span>
</div>
<div class="row mono syn" style="top:599px;height:20px">
<span style="right:1784.0px">23</span>
<span style="left:85px">0.106131728</span>
<span style="left:210px">127.0.0.1</span>
<span style="left:569px">127.0.0.1</span>
<span style="left:895px">TCP</span>
<span style="right:733.5px">66</span>
<span style="left:1136.5px">8080 <svg width="8.92" height="19" viewBox="0 0 8.92 19" style="vertical-align:top"><path d="M0.5 9.4 L7.6 9.4 M4.6 6.2 L7.7 9.4 L4.6 12.6" stroke="currentColor" stroke-width="1.1" fill="none"/></svg> 39440 [FIN, ACK] Seq=198 Ack=157 Win=65536 Len=0 TSval=936415301 TSecr=936415301</span>
</div>
<div class="row mono tcp" style="top:619px;height:20px">
<span style="right:1784.0px">24</span>
<span style="left:85px">0.106158701</span>
<span style="left:210px">127.0.0.1</span>
<span style="left:569px">127.0.0.1</span>
<span style="left:895px">TCP</span>
<span style="right:733.5px">66</span>
<span style="left:1136.5px">39440 <svg width="8.92" height="19" viewBox="0 0 8.92 19" style="vertical-align:top"><path d="M0.5 9.4 L7.6 9.4 M4.6 6.2 L7.7 9.4 L4.6 12.6" stroke="currentColor" stroke-width="1.1" fill="none"/></svg> 8080 [ACK] Seq=157 Ack=199 Win=65536 Len=0 TSval=936415301 TSecr=936415301</span>
</div>
<div class="row mono syn" style="top:639px;height:20px">
<span style="right:1784.0px">25</span>
<span style="left:85px">4.116461630</span>
<span style="left:210px">127.0.0.1</span>
<span style="left:569px">127.0.0.1</span>
<span style="left:895px">TCP</span>
<span style="right:733.5px">74</span>
<span style="left:1136.5px">39448 <svg width="8.92" height="19" viewBox="0 0 8.92 19" style="vertical-align:top"><path d="M0.5 9.4 L7.6 9.4 M4.6 6.2 L7.7 9.4 L4.6 12.6" stroke="currentColor" stroke-width="1.1" fill="none"/></svg> 8080 [SYN] Seq=0 Win=65495 Len=0 MSS=65495 SACK_PERM TSval=936419303 TSecr=0 WS=128</span>
</div>
<div class="row mono syn" style="top:659px;height:20px">
<span style="right:1784.0px">26</span>
<span style="left:85px">4.116473809</span>
<span style="left:210px">127.0.0.1</span>
<span style="left:569px">127.0.0.1</span>
<span style="left:895px">TCP</span>
<span style="right:733.5px">74</span>
<span style="left:1136.5px">8080 <svg width="8.92" height="19" viewBox="0 0 8.92 19" style="vertical-align:top"><path d="M0.5 9.4 L7.6 9.4 M4.6 6.2 L7.7 9.4 L4.6 12.6" stroke="currentColor" stroke-width="1.1" fill="none"/></svg> 39448 [SYN, ACK] Seq=0 Ack=1 Win=65483 Len=0 MSS=65495 SACK_PERM TSval=936419303 TSecr=936419303 WS=128</span>
</div>
<div class="row mono tcp" style="top:679px;height:20px">
<span style="right:1784.0px">27</span>
<span style="left:85px">4.116484766</span>
<span style="left:210px">127.0.0.1</span>
<span style="left:569px">127.0.0.1</span>
<span style="left:895px">TCP</span>
<span style="right:733.5px">66</span>
<span style="left:1136.5px">39448 <svg width="8.92" height="19" viewBox="0 0 8.92 19" style="vertical-align:top"><path d="M0.5 9.4 L7.6 9.4 M4.6 6.2 L7.7 9.4 L4.6 12.6" stroke="currentColor" stroke-width="1.1" fill="none"/></svg> 8080 [ACK] Seq=1 Ack=1 Win=65536 Len=0 TSval=936419303 TSecr=936419303</span>
</div>
<div class="row mono hg" style="top:699px;height:8px">
<span style="right:1784.0px">28</span>
<span style="left:85px">4.116530118</span>
<span style="left:210px">127.0.0.1</span>
<span style="left:569px">127.0.0.1</span>
<span style="left:895px">HTTP</span>
<span style="right:733.5px">221</span>
<span style="left:1136.5px">GET / HTTP/1.1</span>
</div>
<div class="a" style="left:28px;top:159px;width:54px;height:20px;border:1px solid rgba(60,40,10,0.18);background:rgba(255,240,200,0.03)"></div>
<svg class="a" style="left:0;top:159px" width="30" height="240" viewBox="0 159 30 240"><path d="M21 169.8 L11.8 169.8 L11.8 179" fill="none" stroke="#a6a8a8" stroke-width="1.6"/><path d="M11.8 179 L11.8 389.3 L21 389.3" fill="none" stroke="#34404a" stroke-width="1.7" stroke-linecap="round"/></svg>
<svg class="a" style="left:1864px;top:132px" width="37" height="575" viewBox="0 132 37 575"><rect x="0" y="132" width="37" height="575" fill="#e9e7ff"/><rect x="0" y="132.20" width="37" height="1.60" fill="#94948f"/><rect x="0" y="134.75" width="37" height="1.30" fill="#def9c2"/><rect x="0" y="138.85" width="37" height="1.30" fill="#def9c2"/><rect x="0" y="141.20" width="37" height="1.60" fill="#94948f"/><rect x="0" y="144.20" width="37" height="1.60" fill="#94948f"/><rect x="0" y="146.75" width="37" height="1.30" fill="#def9c2"/><rect x="0" y="150.85" width="37" height="1.30" fill="#def9c2"/><rect x="0" y="153.20" width="37" height="1.60" fill="#94948f"/><rect x="0" y="156.20" width="37" height="1.60" fill="#94948f"/><rect x="0" y="158.75" width="37" height="1.30" fill="#def9c2"/><rect x="0" y="162.85" width="37" height="1.30" fill="#def9c2"/><rect x="0" y="165.20" width="37" height="1.60" fill="#94948f"/><rect x="0" y="168.20" width="37" height="1.60" fill="#94948f"/><rect x="0" y="170.75" width="37" height="1.30" fill="#def9c2"/><rect x="0" y="174.85" width="37" height="1.30" fill="#def9c2"/><rect x="0" y="177.20" width="37" height="1.60" fill="#94948f"/><rect x="0" y="180.20" width="37" height="1.60" fill="#94948f"/><rect x="0" y="182.75" width="37" height="1.30" fill="#def9c2"/><rect x="0" y="186.85" width="37" height="1.30" fill="#def9c2"/><rect x="0" y="189.20" width="37" height="1.60" fill="#94948f"/><rect x="0" y="192.20" width="37" height="1.60" fill="#94948f"/><rect x="0" y="194.75" width="37" height="1.30" fill="#def9c2"/><rect x="0" y="198.85" width="37" height="1.30" fill="#def9c2"/><rect x="0" y="201.20" width="37" height="1.60" fill="#94948f"/><rect x="0" y="204.20" width="37" height="1.60" fill="#94948f"/><rect x="0" y="206.75" width="37" height="1.30" fill="#def9c2"/><rect x="0" y="210.85" width="37" height="1.30" fill="#def9c2"/><rect x="0" y="213.20" width="37" height="1.60" fill="#94948f"/><rect x="0" y="216.20" width="37" height="1.60" fill="#94948f"/><rect x="0" y="218.75" width="37" height="1.30" fill="#def9c2"/><rect x="0" y="222.85" width="37" height="1.30" fill="#def9c2"/><rect x="0" y="225.20" width="37" height="1.60" fill="#94948f"/><rect x="0" y="228.20" width="37" height="1.60" fill="#94948f"/><rect x="0" y="230.75" width="37" height="1.30" fill="#def9c2"/><rect x="0" y="234.85" width="37" height="1.30" fill="#def9c2"/><rect x="0" y="237.20" width="37" height="1.60" fill="#94948f"/><rect x="0" y="240.20" width="37" height="1.60" fill="#94948f"/><rect x="0" y="242.75" width="37" height="1.30" fill="#def9c2"/><rect x="0" y="246.85" width="37" height="1.30" fill="#def9c2"/><rect x="0" y="249.20" width="37" height="1.60" fill="#94948f"/><rect x="0" y="252.20" width="37" height="1.60" fill="#94948f"/><rect x="0" y="254.75" width="37" height="1.30" fill="#def9c2"/><rect x="0" y="258.85" width="37" height="1.30" fill="#def9c2"/><rect x="0" y="261.20" width="37" height="1.60" fill="#94948f"/><rect x="0" y="264.20" width="37" height="1.60" fill="#94948f"/><rect x="0" y="266.75" width="37" height="1.30" fill="#def9c2"/><rect x="0" y="270.85" width="37" height="1.30" fill="#def9c2"/><rect x="0" y="273.20" width="37" height="1.60" fill="#94948f"/><rect x="0" y="276.20" width="37" height="1.60" fill="#94948f"/><rect x="0" y="278.75" width="37" height="1.30" fill="#def9c2"/><rect x="0" y="282.85" width="37" height="1.30" fill="#def9c2"/><rect x="0" y="285.20" width="37" height="1.60" fill="#94948f"/><rect x="0" y="288.20" width="37" height="1.60" fill="#94948f"/><rect x="0" y="290.75" width="37" height="1.30" fill="#def9c2"/><rect x="0" y="294.85" width="37" height="1.30" fill="#def9c2"/><rect x="0" y="297.20" width="37" height="1.60" fill="#94948f"/><rect x="0" y="300.20" width="37" height="1.60" fill="#94948f"/><rect x="0" y="302.75" width="37" height="1.30" fill="#def9c2"/><rect x="0" y="306.85" width="37" height="1.30" fill="#def9c2"/><rect x="0" y="309.20" width="37" height="1.60" fill="#94948f"/><rect x="0" y="312.20" width="37" height="1.60" fill="#94948f"/><rect x="0" y="314.75" width="37" height="1.30" fill="#def9c2"/><rect x="0" y="318.85" width="37" height="1.30" fill="#def9c2"/><rect x="0" y="321.20" width="37" height="1.60" fill="#94948f"/><rect x="0" y="324.20" width="37" height="1.60" fill="#94948f"/><rect x="0" y="326.75" width="37" height="1.30" fill="#def9c2"/><rect x="0" y="330.85" width="37" height="1.30" fill="#def9c2"/><rect x="0" y="333.20" width="37" height="1.60" fill="#94948f"/><rect x="0" y="336.20" width="37" height="1.60" fill="#94948f"/><rect x="0" y="338.75" width="37" height="1.30" fill="#def9c2"/><rect x="0" y="342.85" width="37" height="1.30" fill="#def9c2"/><rect x="0" y="345.20" width="37" height="1.60" fill="#94948f"/><rect x="0" y="348.20" width="37" height="1.60" fill="#94948f"/><rect x="0" y="350.75" width="37" height="1.30" fill="#def9c2"/><rect x="0" y="354.85" width="37" height="1.30" fill="#def9c2"/><rect x="0" y="357.20" width="37" height="1.60" fill="#94948f"/><rect x="0" y="360.20" width="37" height="1.60" fill="#94948f"/><rect x="0" y="362.75" width="37" height="1.30" fill="#def9c2"/><rect x="0" y="366.85" width="37" height="1.30" fill="#def9c2"/><rect x="0" y="369.20" width="37" height="1.60" fill="#94948f"/><rect x="0" y="372.20" width="37" height="1.60" fill="#94948f"/><rect x="0" y="374.75" width="37" height="1.30" fill="#def9c2"/><rect x="0" y="378.85" width="37" height="1.30" fill="#def9c2"/><rect x="0" y="381.20" width="37" height="1.60" fill="#94948f"/><rect x="0" y="384.20" width="37" height="1.60" fill="#94948f"/><rect x="0" y="386.75" width="37" height="1.30" fill="#def9c2"/><rect x="0" y="390.85" width="37" height="1.30" fill="#def9c2"/><rect x="0" y="393.20" width="37" height="1.60" fill="#94948f"/><rect x="0" y="396.20" width="37" height="1.60" fill="#94948f"/><rect x="0" y="398.75" width="37" height="1.30" fill="#def9c2"/><rect x="0" y="402.85" width="37" height="1.30" fill="#def9c2"/><rect x="0" y="405.20" width="37" height="1.60" fill="#94948f"/><rect x="0" y="408.20" width="37" height="1.60" fill="#94948f"/><rect x="0" y="410.75" width="37" height="1.30" fill="#def9c2"/><rect x="0" y="414.85" width="37" height="1.30" fill="#def9c2"/><rect x="0" y="417.20" width="37" height="1.60" fill="#94948f"/><rect x="0" y="420.20" width="37" height="1.60" fill="#94948f"/><rect x="0" y="422.75" width="37" height="1.30" fill="#def9c2"/><rect x="0" y="426.85" width="37" height="1.30" fill="#def9c2"/><rect x="0" y="429.20" width="37" height="1.60" fill="#94948f"/><rect x="0" y="432.20" width="37" height="1.60" fill="#94948f"/><rect x="0" y="434.75" width="37" height="1.30" fill="#def9c2"/><rect x="0" y="438.85" width="37" height="1.30" fill="#def9c2"/><rect x="0" y="441.20" width="37" height="1.60" fill="#94948f"/><rect x="0" y="446.20" width="37" height="1.60" fill="#94948f"/><rect x="0" y="448.75" width="37" height="1.30" fill="#def9c2"/><rect x="0" y="452.85" width="37" height="1.30" fill="#def9c2"/><rect x="0" y="455.20" width="37" height="1.60" fill="#94948f"/><rect x="0" y="458.20" width="37" height="1.60" fill="#94948f"/><rect x="0" y="460.75" width="37" height="1.30" fill="#def9c2"/><rect x="0" y="464.85" width="37" height="1.30" fill="#def9c2"/><rect x="0" y="467.20" width="37" height="1.60" fill="#94948f"/><rect x="0" y="470.20" width="37" height="1.60" fill="#94948f"/><rect x="0" y="472.75" width="37" height="1.30" fill="#def9c2"/><rect x="0" y="476.85" width="37" height="1.30" fill="#def9c2"/><rect x="0" y="479.20" width="37" height="1.60" fill="#94948f"/><rect x="0" y="482.20" width="37" height="1.60" fill="#94948f"/><rect x="0" y="484.75" width="37" height="1.30" fill="#def9c2"/><rect x="0" y="488.85" width="37" height="1.30" fill="#def9c2"/><rect x="0" y="491.20" width="37" height="1.60" fill="#94948f"/><rect x="0" y="494.20" width="37" height="1.60" fill="#94948f"/><rect x="0" y="496.75" width="37" height="1.30" fill="#def9c2"/><rect x="0" y="500.85" width="37" height="1.30" fill="#def9c2"/><rect x="0" y="503.20" width="37" height="1.60" fill="#94948f"/><rect x="0" y="506.20" width="37" height="1.60" fill="#94948f"/><rect x="0" y="508.75" width="37" height="1.30" fill="#def9c2"/><rect x="0" y="512.85" width="37" height="1.30" fill="#def9c2"/><rect x="0" y="515.20" width="37" height="1.60" fill="#94948f"/><rect x="0" y="518.20" width="37" height="1.60" fill="#94948f"/><rect x="0" y="520.75" width="37" height="1.30" fill="#def9c2"/><rect x="0" y="524.85" width="37" height="1.30" fill="#def9c2"/><rect x="0" y="527.20" width="37" height="1.60" fill="#94948f"/><rect x="0" y="530.20" width="37" height="1.60" fill="#94948f"/><rect x="0" y="532.75" width="37" height="1.30" fill="#def9c2"/><rect x="0" y="536.85" width="37" height="1.30" fill="#def9c2"/><rect x="0" y="539.20" width="37" height="1.60" fill="#94948f"/><rect x="0" y="542.20" width="37" height="1.60" fill="#94948f"/><rect x="0" y="544.75" width="37" height="1.30" fill="#def9c2"/><rect x="0" y="548.85" width="37" height="1.30" fill="#def9c2"/><rect x="0" y="551.20" width="37" height="1.60" fill="#94948f"/><rect x="0" y="554.20" width="37" height="1.60" fill="#94948f"/><rect x="0" y="556.75" width="37" height="1.30" fill="#def9c2"/><rect x="0" y="560.85" width="37" height="1.30" fill="#def9c2"/><rect x="0" y="563.20" width="37" height="1.60" fill="#94948f"/><rect x="0" y="566.20" width="37" height="1.60" fill="#94948f"/><rect x="0" y="568.75" width="37" height="1.30" fill="#def9c2"/><rect x="0" y="572.85" width="37" height="1.30" fill="#def9c2"/><rect x="0" y="575.20" width="37" height="1.60" fill="#94948f"/><rect x="0" y="578.20" width="37" height="1.60" fill="#94948f"/><rect x="0" y="580.75" width="37" height="1.30" fill="#def9c2"/><rect x="0" y="584.85" width="37" height="1.30" fill="#def9c2"/><rect x="0" y="587.20" width="37" height="1.60" fill="#94948f"/><rect x="0" y="590.20" width="37" height="1.60" fill="#94948f"/><rect x="0" y="592.75" width="37" height="1.30" fill="#def9c2"/><rect x="0" y="596.85" width="37" height="1.30" fill="#def9c2"/><rect x="0" y="599.20" width="37" height="1.60" fill="#94948f"/><rect x="0" y="602.20" width="37" height="1.60" fill="#94948f"/><rect x="0" y="604.75" width="37" height="1.30" fill="#def9c2"/><rect x="0" y="608.85" width="37" height="1.30" fill="#def9c2"/><rect x="0" y="611.20" width="37" height="1.60" fill="#94948f"/><rect x="0" y="614.20" width="37" height="1.60" fill="#94948f"/><rect x="0" y="616.75" width="37" height="1.30" fill="#def9c2"/><rect x="0" y="620.85" width="37" height="1.30" fill="#def9c2"/><rect x="0" y="623.20" width="37" height="1.60" fill="#94948f"/><rect x="0" y="626.20" width="37" height="1.60" fill="#94948f"/><rect x="0" y="628.75" width="37" height="1.30" fill="#def9c2"/><rect x="0" y="632.85" width="37" height="1.30" fill="#def9c2"/><rect x="0" y="635.20" width="37" height="1.60" fill="#94948f"/><rect x="0" y="638.20" width="37" height="1.60" fill="#94948f"/><rect x="0" y="640.75" width="37" height="1.30" fill="#def9c2"/><rect x="0" y="644.85" width="37" height="1.30" fill="#def9c2"/><rect x="0" y="647.20" width="37" height="1.60" fill="#94948f"/><rect x="0" y="650.20" width="37" height="1.60" fill="#94948f"/><rect x="0" y="652.75" width="37" height="1.30" fill="#def9c2"/><rect x="0" y="656.85" width="37" height="1.30" fill="#def9c2"/><rect x="0" y="659.20" width="37" height="1.60" fill="#94948f"/><rect x="0" y="662.20" width="37" height="1.60" fill="#94948f"/><rect x="0" y="664.75" width="37" height="1.30" fill="#def9c2"/><rect x="0" y="668.85" width="37" height="1.30" fill="#def9c2"/><rect x="0" y="671.20" width="37" height="1.60" fill="#94948f"/><rect x="0" y="674.20" width="37" height="1.60" fill="#94948f"/><rect x="0" y="676.75" width="37" height="1.30" fill="#def9c2"/><rect x="0" y="680.85" width="37" height="1.30" fill="#def9c2"/><rect x="0" y="683.20" width="37" height="1.60" fill="#94948f"/><rect x="0" y="686.20" width="37" height="1.60" fill="#94948f"/><rect x="0" y="688.75" width="37" height="1.30" fill="#def9c2"/><rect x="0" y="692.85" width="37" height="1.30" fill="#def9c2"/><rect x="0" y="695.20" width="37" height="1.60" fill="#94948f"/><rect x="0" y="698.20" width="37" height="1.60" fill="#94948f"/><rect x="0" y="700.75" width="37" height="1.30" fill="#def9c2"/><rect x="0" y="704.85" width="37" height="1.30" fill="#def9c2"/><rect x="0" y="132" width="37" height="1.2" fill="#8b6c42"/><rect x="0" y="445" width="37" height="1.2" fill="#b00000"/><rect x="0" y="132" width="0.8" height="575" fill="#f4f4ff" opacity="0.6"/></svg>
<div class="a" style="left:1863px;top:132px;width:1px;height:575px;background:#2e2e2e"></div>
<div class="a" style="left:1901px;top:132px;width:1px;height:575px;background:#1c1c1c"></div>
<div class="a" style="left:1902px;top:132px;width:13px;height:575px;background:#474747"></div>
<div class="a" style="left:1902px;top:132px;width:13px;height:15px;background:#474747;border-left:1px solid #575757;border-top:1px solid #575757"></div>
<svg class="a" style="left:1904px;top:136px" width="11" height="7" viewBox="0 0 11 7"><path d="M1.4 6 L6.4 0.8 L11.4 6 Z" fill="#c8c8c8"/></svg>
<div class="a" style="left:1902px;top:147px;width:13px;height:1px;background:#1b1b1b"></div>
<div class="a" style="left:1902px;top:148px;width:13px;height:33px;background:#4c4c4c;border-left:1px solid #5c5c5c;border-top:1px solid #5c5c5c;border-bottom:1px solid #404040"></div>
<div class="a" style="left:1902px;top:181px;width:13px;height:1px;background:#1b1b1b"></div>
<div class="a" style="left:1902px;top:688px;width:13px;height:2px;background:#1b1b1b"></div>
<div class="a" style="left:1902px;top:690px;width:13px;height:17px;background:#474747;border-left:1px solid #575757;border-top:1px solid #575757;border-bottom:1px solid #3a3a3a"></div>
<svg class="a" style="left:1904px;top:695px" width="11" height="7" viewBox="0 0 11 7"><path d="M1.4 0.8 L6.4 6 L11.4 0.8 Z" fill="#c8c8c8"/></svg>
<div class="a" style="left:1px;top:707px;width:1862px;height:16px;background:#474747"></div>
<div class="a" style="left:1px;top:707px;width:16px;height:16px;background:#4a4a4a;border:1px solid #5a5a5a;border-right-color:#3a3a3a"></div>
<svg class="a" style="left:5px;top:710px" width="8" height="10" viewBox="0 0 8 10"><path d="M6.5 0.5 L1 5 L6.5 9.5 Z" fill="#c8c8c8"/></svg>
<div class="a" style="left:17px;top:707px;width:1451px;height:16px;background:#4e4e4e;border:1px solid #5c5c5c;border-right-color:#383838;border-bottom-color:#3c3c3c"></div>
<div class="a" style="left:1846px;top:707px;width:17px;height:16px;background:#4a4a4a;border:1px solid #5a5a5a;border-left-color:#3a3a3a"></div>
<svg class="a" style="left:1851px;top:710px" width="8" height="10" viewBox="0 0 8 10"><path d="M1.5 0.5 L7 5 L1.5 9.5 Z" fill="#c8c8c8"/></svg>
<div class="a" style="left:1px;top:722px;width:1862px;height:1px;background:#5a5a5a"></div>
<div class="a" style="left:1863px;top:707px;width:52px;height:16px;background:#1f1f1f"></div>
<div class="a" style="left:0;top:723px;width:1915px;height:9px;background:#1f1f1f"></div>
<div class="a" style="left:0;top:723px;width:1915px;height:2px;background:#151515"></div>
<div class="a" style="left:951px;top:727px;width:2px;height:2px;background:#6a6a6a"></div>
<div class="a" style="left:955px;top:727px;width:2px;height:2px;background:#6a6a6a"></div>
<div class="a" style="left:959px;top:727px;width:2px;height:2px;background:#6a6a6a"></div>
<div class="a" style="left:963px;top:727px;width:2px;height:2px;background:#6a6a6a"></div>
<div class="a" style="left:967px;top:727px;width:2px;height:2px;background:#6a6a6a"></div>
<div class="a" style="left:971px;top:727px;width:2px;height:2px;background:#6a6a6a"></div>
<div class="a" style="left:0;top:732px;width:1px;height:260px;background:#111"></div>
<div class="a" style="left:1px;top:732px;width:623px;height:243px;background:#2d2d2d"></div>
<div class="a" style="left:1px;top:732px;width:623px;height:80px;overflow:hidden">
<div class="a mono" style="left:25px;top:0px;width:600px;height:20px;background:#1f1f1f;color:#fff"><span style="position:absolute;left:4px;top:0px">Frame 1: 74 bytes on wire (592 bits), 74 bytes captured (592 bits)</span></div>
<svg class="a" style="left:10px;top:5px" width="6" height="11" viewBox="0 0 6 11"><path d="M0 0.3 L5.2 5.3 L0 10.3Z" fill="#a8a8a8"/></svg>
<div class="a mono" style="left:25px;top:20px;width:600px;height:20px;background:#1f1f1f;color:#fff"><span style="position:absolute;left:4px;top:0px">Ethernet II, Src: 00:00:00_00:00:00 (00:00:00:00:00:00), Dst: 00:00:00_00:00:00 (00:00:00:00:00:00)</span></div>
<svg class="a" style="left:10px;top:25px" width="6" height="11" viewBox="0 0 6 11"><path d="M0 0.3 L5.2 5.3 L0 10.3Z" fill="#a8a8a8"/></svg>
<div class="a mono" style="left:25px;top:40px;width:600px;height:20px;background:#1f1f1f;color:#fff"><span style="position:absolute;left:4px;top:0px">Internet Protocol Version 4, Src: 127.0.0.1, Dst: 127.0.0.1</span></div>
<svg class="a" style="left:10px;top:45px" width="6" height="11" viewBox="0 0 6 11"><path d="M0 0.3 L5.2 5.3 L0 10.3Z" fill="#a8a8a8"/></svg>
<div class="a mono" style="left:25px;top:60px;width:600px;height:20px;background:#80b6f2;color:#000"><span style="position:absolute;left:4px;top:0px">Transmission Control Protocol, Src Port: 39430, Dst Port: 8080, Seq: 0, Len: 0</span></div>
<svg class="a" style="left:10px;top:65px" width="6" height="11" viewBox="0 0 6 11"><path d="M0 0.3 L5.2 5.3 L0 10.3Z" fill="#a8a8a8"/></svg>
</div>
<div class="a" style="left:1px;top:975px;width:623px;height:16px;background:#474747"></div>
<div class="a" style="left:1px;top:975px;width:16px;height:16px;background:#4a4a4a;border:1px solid #5a5a5a;border-right-color:#3a3a3a"></div>
<svg class="a" style="left:5px;top:978px" width="8" height="10" viewBox="0 0 8 10"><path d="M6.5 0.5 L1 5 L6.5 9.5 Z" fill="#c8c8c8"/></svg>
<div class="a" style="left:17px;top:975px;width:400px;height:16px;background:#4e4e4e;border:1px solid #5c5c5c;border-right-color:#383838;border-bottom-color:#3c3c3c"></div>
<div class="a" style="left:607px;top:975px;width:17px;height:16px;background:#4a4a4a;border:1px solid #5a5a5a;border-left-color:#3a3a3a"></div>
<svg class="a" style="left:612px;top:978px" width="8" height="10" viewBox="0 0 8 10"><path d="M1.5 0.5 L7 5 L1.5 9.5 Z" fill="#c8c8c8"/></svg>
<div class="a" style="left:1px;top:990px;width:623px;height:1px;background:#5a5a5a"></div>
<div class="a" style="left:624px;top:732px;width:6px;height:260px;background:#1f1f1f"></div>
<div class="a" style="left:628px;top:852px;width:2px;height:2px;background:#6a6a6a"></div>
<div class="a" style="left:628px;top:856px;width:2px;height:2px;background:#6a6a6a"></div>
<div class="a" style="left:628px;top:860px;width:2px;height:2px;background:#6a6a6a"></div>
<div class="a" style="left:628px;top:864px;width:2px;height:2px;background:#6a6a6a"></div>
<div class="a" style="left:628px;top:868px;width:2px;height:2px;background:#6a6a6a"></div>
<div class="a" style="left:628px;top:872px;width:2px;height:2px;background:#6a6a6a"></div>
<div class="a" style="left:630px;top:732px;width:1285px;height:260px;background:#2d2d2d"></div>
<div class="a" style="left:630px;top:731px;width:55px;height:261px;background:#1f1f1f"></div>
<div class="a mono" style="left:640px;top:732.00px;color:#7a7a7a">0000</div>
<div class="a mono" style="left:693.2px;top:732.00px;color:#fff;letter-spacing:0.015px">00 00 00 00 00 00 00 00  00 00 00 00 08 00 45 00</div>
<div class="a mono" style="left:1149px;top:732.00px;color:#fff"><span style="color:#8a8a8a">·</span><span style="color:#8a8a8a">·</span><span style="color:#8a8a8a">·</span><span style="color:#8a8a8a">·</span><span style="color:#8a8a8a">·</span><span style="color:#8a8a8a">·</span><span style="color:#8a8a8a">·</span><span style="color:#8a8a8a">·</span> <span style="color:#8a8a8a">·</span><span style="color:#8a8a8a">·</span><span style="color:#8a8a8a">·</span><span style="color:#8a8a8a">·</span><span style="color:#8a8a8a">·</span><span style="color:#8a8a8a">·</span>E<span style="color:#8a8a8a">·</span></div>
<div class="a mono" style="left:640px;top:750.93px;color:#7a7a7a">0010</div>
<div class="a mono" style="left:693.2px;top:750.93px;color:#fff;letter-spacing:0.015px">00 3c 24 27 40 00 40 06  18 93 7f 00 00 01 7f 00</div>
<div class="a mono" style="left:1149px;top:750.93px;color:#fff"><span style="color:#8a8a8a">·</span>&lt;$&#x27;@<span style="color:#8a8a8a">·</span>@<span style="color:#8a8a8a">·</span> <span style="color:#8a8a8a">·</span><span style="color:#8a8a8a">·</span><span style="color:#8a8a8a">·</span><span style="color:#8a8a8a">·</span><span style="color:#8a8a8a">·</span><span style="color:#8a8a8a">·</span><span style="color:#8a8a8a">·</span><span style="color:#8a8a8a">·</span></div>
<div class="a mono" style="left:640px;top:769.86px;color:#7a7a7a">0020</div>
<div class="a mono" style="left:693.2px;top:769.86px;color:#fff;letter-spacing:0.015px">00 01 9a 06 1f 90 70 a7  45 91 00 00 00 00 a0 02</div>
<div class="a mono" style="left:1149px;top:769.86px;color:#fff"><span style="color:#8a8a8a">·</span><span style="color:#8a8a8a">·</span><span style="color:#8a8a8a">·</span><span style="color:#8a8a8a">·</span><span style="color:#8a8a8a">·</span><span style="color:#8a8a8a">·</span>p<span style="color:#8a8a8a">·</span> E<span style="color:#8a8a8a">·</span><span style="color:#8a8a8a">·</span><span style="color:#8a8a8a">·</span><span style="color:#8a8a8a">·</span><span style="color:#8a8a8a">·</span><span style="color:#8a8a8a">·</span><span style="color:#8a8a8a">·</span></div>
<div class="a mono" style="left:640px;top:788.79px;color:#7a7a7a">0030</div>
<div class="a mono" style="left:693.2px;top:788.79px;color:#fff;letter-spacing:0.015px">ff d7 fe 30 00 00 02 04  ff d7 04 02 08 0a 37 d0</div>
<div class="a mono" style="left:1149px;top:788.79px;color:#fff"><span style="color:#8a8a8a">·</span><span style="color:#8a8a8a">·</span><span style="color:#8a8a8a">·</span>0<span style="color:#8a8a8a">·</span><span style="color:#8a8a8a">·</span><span style="color:#8a8a8a">·</span><span style="color:#8a8a8a">·</span> <span style="color:#8a8a8a">·</span><span style="color:#8a8a8a">·</span><span style="color:#8a8a8a">·</span><span style="color:#8a8a8a">·</span><span style="color:#8a8a8a">·</span><span style="color:#8a8a8a">·</span>7<span style="color:#8a8a8a">·</span></div>
<div class="a mono" style="left:640px;top:807.72px;color:#7a7a7a">0040</div>
<div class="a mono" style="left:693.2px;top:807.72px;color:#fff;letter-spacing:0.015px">8f db 00 00 00 00 01 03  03 07</div>
<div class="a mono" style="left:1149px;top:807.72px;color:#fff"><span style="color:#8a8a8a">·</span><span style="color:#8a8a8a">·</span><span style="color:#8a8a8a">·</span><span style="color:#8a8a8a">·</span><span style="color:#8a8a8a">·</span><span style="color:#8a8a8a">·</span><span style="color:#8a8a8a">·</span><span style="color:#8a8a8a">·</span> <span style="color:#8a8a8a">·</span><span style="color:#8a8a8a">·</span></div>
<div class="a" style="left:0;top:992px;width:1915px;height:28px;background:#1e1e1e"></div>
<div class="a" style="left:13px;top:998px;width:17px;height:17px;border-radius:50%;background:radial-gradient(circle at 35% 30%,#e8e6a2,#dedb66 55%,#d8d450)"></div>
<svg class="a" style="left:41px;top:997px" width="19" height="19" viewBox="0 0 19 19"><defs><linearGradient id="stb" x1="0" y1="0" x2="1" y2="0"><stop offset="0" stop-color="#58b0e8"/><stop offset="1" stop-color="#1c96e0"/></linearGradient></defs><path d="M0.6 1 L13.6 1 L13.6 18 L0.6 18 Z" fill="#ecece6"/><path d="M0.6 1 L13.6 1 L13.6 5.5 Q7 6 0.6 5.5 Z" fill="url(#stb)"/><path d="M4.3 6 Q5 3.5 5.6 2.5 Q6 4.5 6.6 6 Z" fill="#f0f0f0"/><path d="M3 10.5 L12 10.5 M3 13 L12 13 M3 16 L12 16" stroke="#c8c8c0" stroke-width="0.9"/><path d="M17.6 2.6 L8.2 12.2" stroke="#5a5a5a" stroke-width="2.9" stroke-linecap="round"/><path d="M8.6 11.2 L6.6 14.2 L9.6 12.4 Z" fill="#1a1a1a" stroke="#1a1a1a" stroke-width="1.4" stroke-linejoin="round"/></svg>
<div class="a ui" style="left:79px;top:998px;color:#fff">beepboop.pcapng</div>
<div class="a" style="left:1265px;top:998px;width:1px;height:22px;background:#2c2c2c"></div>
<div class="a" style="left:1270px;top:998px;width:1px;height:22px;background:#383838"></div>
<div class="a" style="left:1798px;top:998px;width:1px;height:22px;background:#2c2c2c"></div>
<div class="a" style="left:1803px;top:998px;width:1px;height:22px;background:#383838"></div>
<div class="a ui" style="left:1285px;top:998px;color:#fff;letter-spacing:-0.45px">Packets: 2786</div>
<div class="a ui" style="left:1818px;top:998px;color:#fff">Profile: Default</div>
</body></html>
